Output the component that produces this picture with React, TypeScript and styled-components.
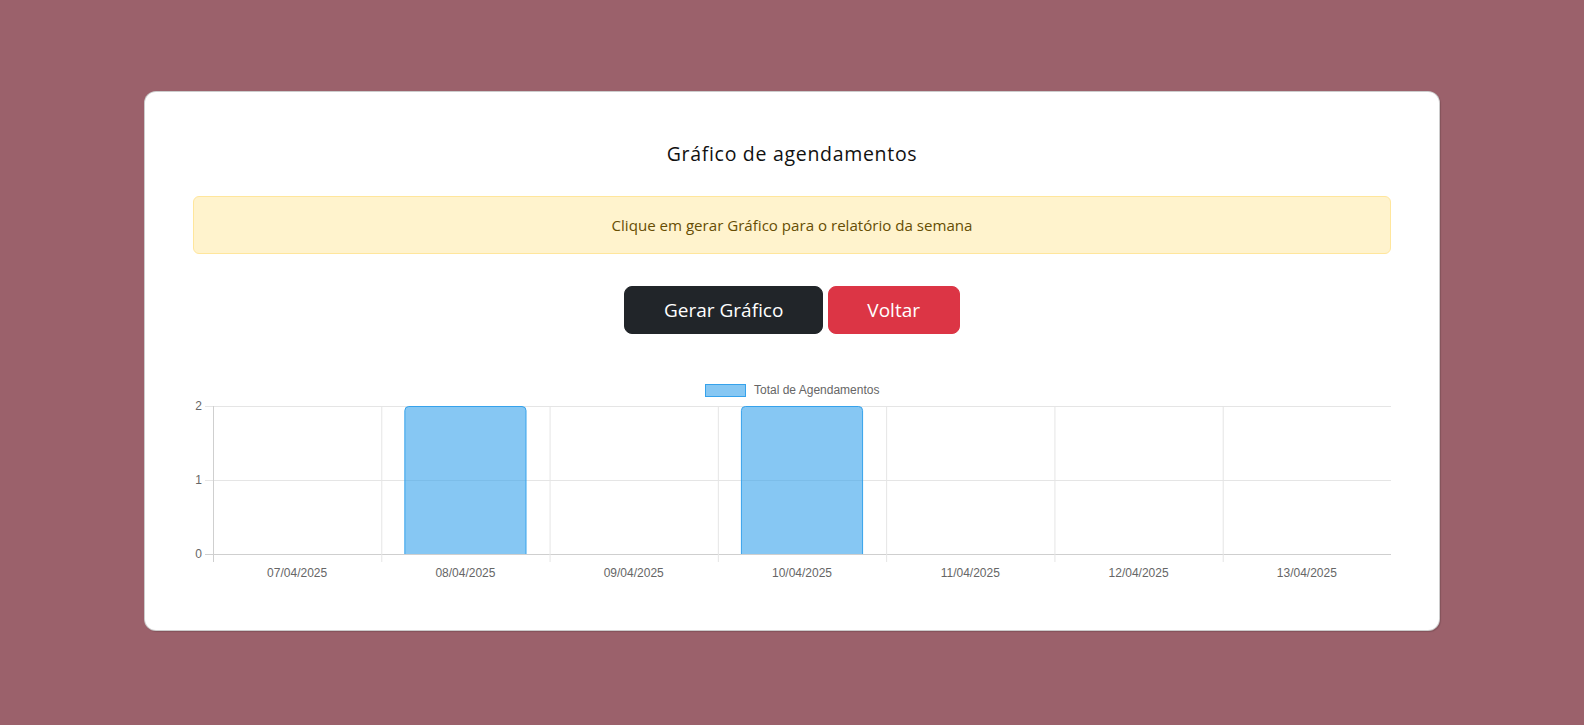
import React from "react";
import styled, { createGlobalStyle } from "styled-components";

const GlobalStyle = createGlobalStyle`
    html, body {
        margin: 0;
        padding: 0;
        background: #9b616b;
    }
    * {
        box-sizing: border-box;
    }
`;

const DAYS = [
    { label: "07/04/2025", total: 0 },
    { label: "08/04/2025", total: 2 },
    { label: "09/04/2025", total: 0 },
    { label: "10/04/2025", total: 2 },
    { label: "11/04/2025", total: 0 },
    { label: "12/04/2025", total: 0 },
    { label: "13/04/2025", total: 0 },
];

const CHART_W = 1198;
const CHART_H = 208;
const PLOT = { left: 20, right: 1198, top: 32, bottom: 180 };
const MAX = 2;

const BarChart: React.FunctionComponent = () => {
    const step = (PLOT.right - PLOT.left) / DAYS.length;
    const barW = step * 0.8 * 0.9;
    const yOf = (v: number) => PLOT.bottom - ((PLOT.bottom - PLOT.top) * v) / MAX;

    return (
        <ChartSvg viewBox={`0 0 ${CHART_W} ${CHART_H}`} width={CHART_W} height={CHART_H}>
            {/* legend */}
            <rect x={512.5} y={10.5} width={40} height={12} fill="rgba(54,162,235,0.6)" stroke="rgb(54,162,235)" strokeWidth={1} />
            <text x={561} y={20} className="legend">Total de Agendamentos</text>

            {/* horizontal grid */}
            {[0, 1, 2].map((v) => (
                <g key={`y_${v}`}>
                    <line x1={PLOT.left - 8} x2={PLOT.right} y1={yOf(v) + 0.5} y2={yOf(v) + 0.5} stroke={v === 0 ? "#cfcfcf" : "#e5e5e5"} />
                    <text x={PLOT.left - 11} y={yOf(v) + 4} textAnchor="end" className="tick">{v}</text>
                </g>
            ))}

            {/* vertical grid */}
            {DAYS.map((_, i) => (
                <line key={`x_${i}`} x1={PLOT.left + step * i + 0.5} x2={PLOT.left + step * i + 0.5} y1={PLOT.top} y2={PLOT.bottom + 8} stroke={i === 0 ? "#cfcfcf" : "#e5e5e5"} />
            ))}

            {/* bars, rounded on top */}
            {DAYS.map((d, i) => {
                if (!d.total) return null;
                const x = PLOT.left + step * i + (step - barW) / 2;
                const y = yOf(d.total) + 0.5;
                const r = 4;
                const path = `M${x},${PLOT.bottom} L${x},${y + r} Q${x},${y} ${x + r},${y} L${x + barW - r},${y} Q${x + barW},${y} ${x + barW},${y + r} L${x + barW},${PLOT.bottom}`;
                return <path key={`bar_${i}`} d={path} fill="rgba(54,162,235,0.6)" stroke="rgb(54,162,235)" strokeWidth={1} />;
            })}

            {/* labels */}
            {DAYS.map((d, i) => (
                <text key={`l_${i}`} x={PLOT.left + step * (i + 0.5)} y={203} textAnchor="middle" className="tick">{d.label}</text>
            ))}
        </ChartSvg>
    );
};

const App: React.FunctionComponent = () => {
    return (
        <Page>
            <GlobalStyle />
            <Card>
                <Title>Gráfico de agendamentos</Title>
                <Alert>Clique em gerar Gráfico para o relatório da semana</Alert>
                <Actions>
                    <Button $variant="dark">Gerar Gráfico</Button>
                    <Button $variant="danger">Voltar</Button>
                </Actions>
                <ChartWrapper>
                    <BarChart />
                </ChartWrapper>
            </Card>
        </Page>
    );
};

const Page = styled.div`
    min-height: 725px;
    padding-top: 91px;
    display: flex;
    justify-content: center;
    align-items: flex-start;
    font-family: "Segoe UI", "Open Sans", "Noto Sans", sans-serif;
`;

const Card = styled.div`
    width: 1296px;
    background: #fff;
    border: 1px solid rgba(0, 0, 0, 0.2);
    border-radius: 12px;
    box-shadow: 1px 1px 1px rgba(0, 0, 0, 0.15);
    padding: 48px;
    display: flex;
    flex-direction: column;
`;

const Title = styled.h4`
    margin: 0 0 32px;
    padding-top: 2px;
    height: 24px;
    font-size: 19.5px;
    line-height: 24px;
    font-weight: 400;
    letter-spacing: 0.7px;
    color: #111;
    text-align: center;
`;

const Alert = styled.div`
    padding: 16px;
    border: 1px solid #ffe69c;
    border-radius: 6px;
    background: #fff3cd;
    color: #664d03;
    font-size: 15.1px;
    line-height: 24px;
    text-align: center;
`;

const Actions = styled.div`
    margin-top: 32px;
    display: flex;
    justify-content: center;
    gap: 5px;
`;

const Button = styled.button<{ $variant: "dark" | "danger" }>`
    font-family: inherit;
    font-size: 19px;
    line-height: 30px;
    padding: 8px 38.5px;
    border-radius: 8px;
    border: 1px solid ${(p) => (p.$variant === "dark" ? "#212529" : "#dc3545")};
    background: ${(p) => (p.$variant === "dark" ? "#212529" : "#dc3545")};
    color: #fff;
    cursor: pointer;
`;

const ChartWrapper = styled.div`
    margin-top: 40px;
    height: 208px;
`;

const ChartSvg = styled.svg`
    display: block;
    font-family: "Liberation Sans", Arial, sans-serif;

    .legend,
    .tick {
        font-size: 12px;
        fill: #666;
    }
`;

export default App;
